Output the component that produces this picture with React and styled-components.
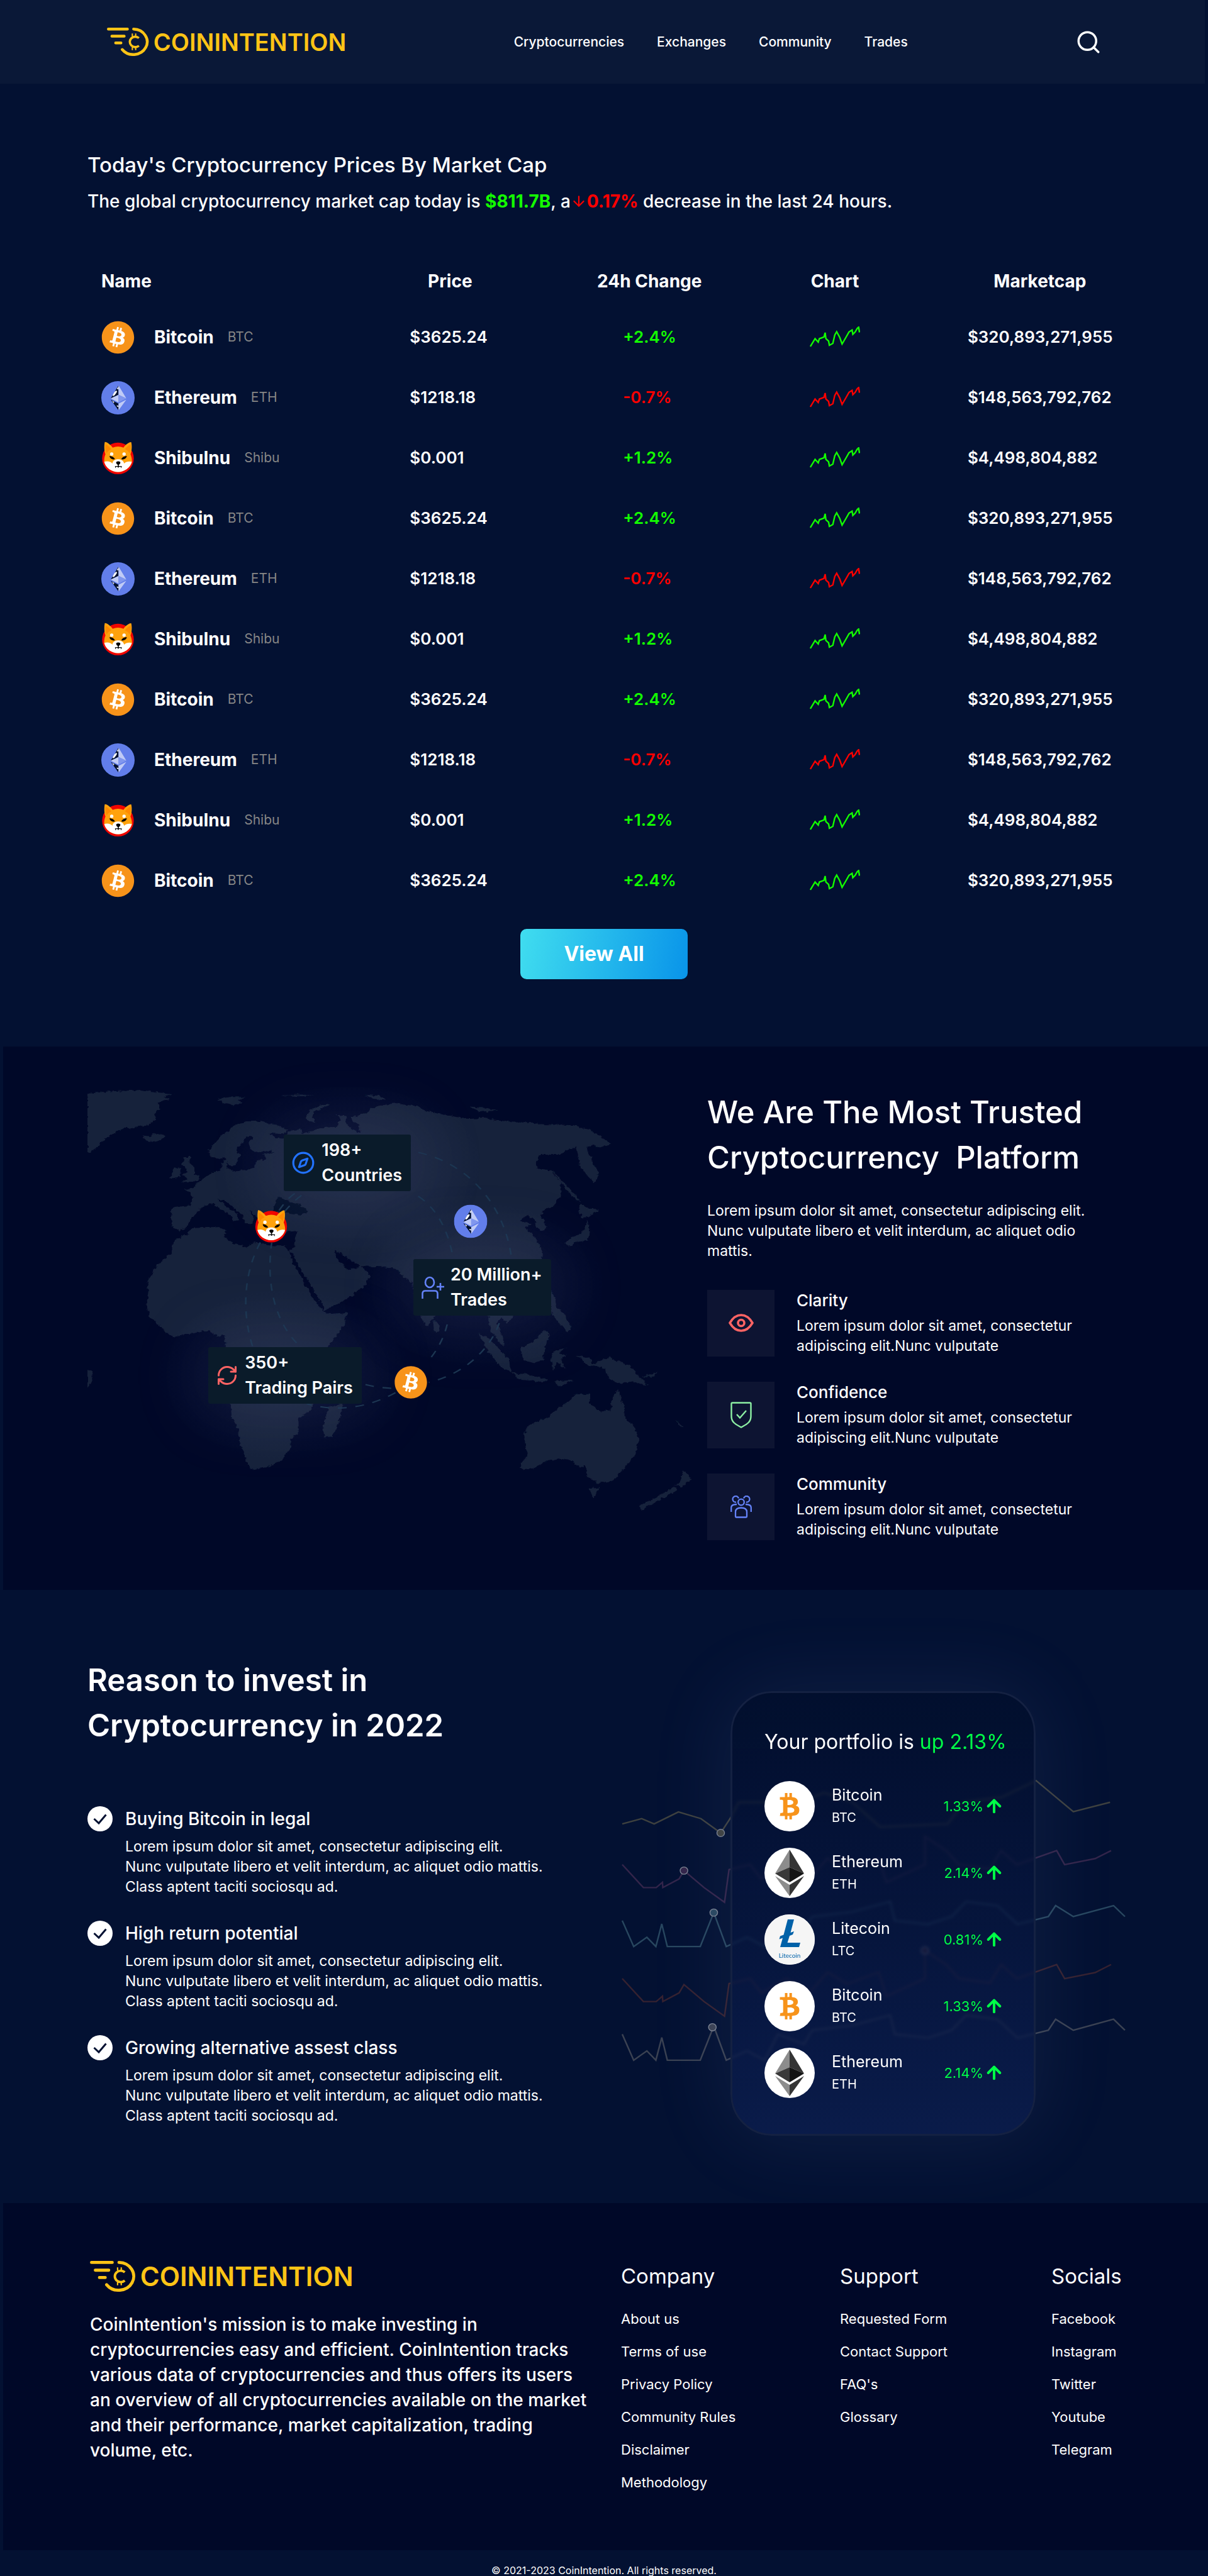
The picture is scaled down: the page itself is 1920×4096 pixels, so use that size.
import React from "react";
import styled, { createGlobalStyle } from "styled-components";
import { Search, ArrowDown, ArrowUp, Compass, RefreshCw } from "lucide-react";
import { FaBitcoin, FaBtc } from "react-icons/fa";

const color = {
  page: "#031132",
  deep: "#000828",
  nav: "#0a1837",
  gold: "#fec416",
  up: "#14ff00",
  down: "#ff0000",
  mint: "#00ff47",
  muted: "#868686",
};

const GlobalStyle = createGlobalStyle`
  *, *::before, *::after { box-sizing: border-box; }
  body {
    margin: 0;
    background: ${color.page};
    color: #fff;
    font-family: Inter, "Open Sans", "Liberation Sans", sans-serif;
    font-size: 23px;
    line-height: 32px;
  }
  h1, h2, h3, p, ul { margin: 0; padding: 0; font-weight: inherit; }
  ul { list-style: none; }
  a { color: inherit; text-decoration: none; }
  svg { display: block; flex: none; }
`;

/* ---------- Logo ---------- */

const LogoLink = styled.a`
  display: flex;
  width: fit-content;
  align-items: center;
  gap: 7px;
  color: ${color.gold};
  font-size: ${(p) => (p.$large ? 42 : 38)}px;
  line-height: 44px;
  font-weight: 600;

  svg {
    height: ${(p) => (p.$large ? 49 : 45)}px;
    width: auto;
  }
`;

function Logo({ large }) {
  return (
    <LogoLink href="#home" $large={large}>
      <svg viewBox="48 48 300 202" fill="none" stroke="currentColor" strokeLinecap="round" aria-hidden="true">
        <g strokeWidth="20">
          <path d="M58 58H194M83 109H171M110 157H148" />
          <path d="M238 58A99 91 0 1 1 157 204" />
        </g>
        <g strokeWidth="16" strokeLinecap="butt">
          <path d="M276 122A39 37 0 1 0 276 177" />
          <path strokeWidth="9" d="M229 90V112M253 90V112M229 186V208M253 186V208" />
        </g>
      </svg>
      COININTENTION
    </LogoLink>
  );
}

/* ---------- Coins ---------- */

const BtcDisc = styled.span`
  display: flex;
  width: 53px;
  height: 53px;
  border-radius: 50%;
  color: #f7931a;
  background: radial-gradient(circle, #fff 60%, transparent 61%);
`;

function ShibaCoin() {
  return (
    <svg width="53" height="53" viewBox="36 912 240 240" aria-hidden="true">
      <circle cx="156" cy="1034" r="114" fill="#f00500" />
      <path d="M61 916C76 914 104 938 118 956Q156 940 196 956C210 936 238 914 251 917C258 940 256 980 246 1004C256 1030 258 1050 256 1060C246 1100 200 1130 157 1132C110 1130 66 1100 57 1058C56 1040 58 1022 66 1004C56 976 56 940 61 916Z" fill="#ffa20d" />
      <path d="M68 932C84 940 98 954 108 968C92 974 80 986 74 998C66 976 64 950 68 932ZM246 932C230 940 214 954 206 968C222 974 234 986 240 998C247 976 249 950 246 932Z" fill="#ff8a00" />
      <path d="M57 1058C80 1050 104 1056 116 1070C120 1046 140 1040 158 1040C178 1040 196 1050 200 1070C214 1056 238 1052 256 1058C246 1100 200 1132 157 1132C110 1132 66 1100 57 1058Z" fill="#fff" />
      <circle cx="111" cy="1002" r="12" fill="#fff" />
      <circle cx="200" cy="1002" r="12" fill="#fff" />
      <path d="M95 1017C112 1016 130 1026 134 1040C118 1043 98 1036 95 1017ZM220 1017C202 1016 184 1026 180 1040C196 1043 216 1036 220 1017Z" fill="#000" />
      <path d="M143 1060Q158 1050 173 1060Q174 1074 162 1079V1089L184 1090L180 1104L176 1094H162V1100H155V1094H142L138 1104L134 1090L155 1089V1079Q142 1074 143 1060Z" fill="#000" />
    </svg>
  );
}

function EthCoin() {
  return (
    <svg width="53" height="53" viewBox="36 480 240 240" aria-hidden="true">
      <circle cx="156" cy="600" r="120" fill="#627eea" />
      <path d="M160 510L104 604L160 578ZM160 690L104 614L160 642Z" fill="#04122f" />
      <path d="M160 518V540L148 536ZM145 548C152 552 148 562 140 570C134 580 126 590 118 586C118 574 128 566 132 556ZM114 620L130 630L124 638ZM148 654L160 658V666L148 662Z" fill="#fff" />
      <path d="M160 510L216 604L160 578ZM160 642L216 614L160 690ZM104 604L160 578V634Z" fill="#c0cbf6" />
      <path d="M160 578L216 604L160 634Z" fill="#8197ee" />
    </svg>
  );
}

const coins = {
  btc: () => (
    <BtcDisc>
      <FaBitcoin size={53} />
    </BtcDisc>
  ),
  eth: EthCoin,
  shib: ShibaCoin,
};

/* ---------- Header ---------- */

const Header = styled.header`
  display: flex;
  align-items: center;
  justify-content: space-between;
  min-height: 133px;
  margin-right: 5px;
  padding: 0 164px 0 170px;
  background: ${color.nav};
`;

const NavList = styled.nav`
  display: flex;
  gap: 52px;
  font-size: 21px;
  font-weight: 500;
`;

const IconButton = styled.button`
  display: flex;
  padding: 0;
  border: 0;
  background: none;
  color: #fff;
  cursor: pointer;
`;

/* ---------- Market ---------- */

const Market = styled.section`
  display: flex;
  flex-direction: column;
  padding: 105px 139px 107px;
`;

const MarketTitle = styled.h1`
  font-size: 33px;
  line-height: 48px;
  font-weight: 500;
`;

const MarketSummary = styled.p`
  display: flex;
  align-items: center;
  margin-top: 14px;
  font-size: 28px;
  line-height: 40px;
  font-weight: 500;
  white-space: pre;
`;

const Trend = styled.strong`
  display: inline-flex;
  align-items: center;
  font-weight: 700;
  color: ${(p) => (p.$down ? color.down : color.up)};
`;

const PriceTable = styled.table`
  width: 100%;
  margin-top: 66px;
  border-collapse: collapse;
  table-layout: fixed;
  font-size: 26px;
  font-weight: 600;

  th {
    height: 82px;
    padding: 0;
    font-size: 28px;
    font-weight: 700;
  }
  td {
    height: 96px;
    padding: 0;
  }
  th:first-child,
  td:first-child {
    padding-left: 22px;
    text-align: left;
  }
`;

const Col = styled.col`
  width: ${(p) => p.$share}%;
`;

const CoinName = styled.div`
  display: flex;
  align-items: center;
  gap: 22px;
  font-size: 28px;
  font-weight: 700;

  > :first-child {
    margin-right: 9px;
  }
`;

const Ticker = styled.span`
  font-size: 21px;
  font-weight: 400;
  color: ${color.muted};
`;

const Value = styled.div`
  width: ${(p) => p.$width}px;
  margin: 0 auto;
  color: ${(p) => p.$color || "#fff"};
`;

function Sparkline() {
  return (
    <svg width="80" height="34" viewBox="0 0 80 34" fill="none" stroke="currentColor" strokeWidth="2.4" role="img" aria-label="Price trend">
      <path d="M1 32L8.5 19.5L13.5 25L15.3 19.5L22.6 16.8L24.5 10L25.7 19.5L30 23.3L31.2 30L36.7 27L39.8 13.7L42.8 8.4L47.7 17.5L51.4 28L57.5 17.5L62.4 8.8L67.3 5.7L68.5 12.6L72.2 8.8L75.3 3.4L77.7 1.1L79 9.5" />
    </svg>
  );
}

const ViewAll = styled.button`
  align-self: center;
  width: 266px;
  height: 80px;
  margin-top: 29px;
  border: 0;
  border-radius: 10px;
  background: linear-gradient(100deg, #40ddef, #0994e9);
  color: #fff;
  font: 700 32px/40px Inter, sans-serif;
  cursor: pointer;
`;

const market = {
  btc: { name: "Bitcoin", ticker: "BTC", price: "$3625.24", change: "+2.4%", cap: "$320,893,271,955" },
  eth: { name: "Ethereum", ticker: "ETH", price: "$1218.18", change: "-0.7%", cap: "$148,563,792,762" },
  shib: { name: "ShibuInu", ticker: "Shibu", price: "$0.001", change: "+1.2%", cap: "$4,498,804,882" },
};
const listing = ["btc", "eth", "shib", "btc", "eth", "shib", "btc", "eth", "shib", "btc"];

function MarketRow({ id }) {
  const coin = market[id];
  const Icon = coins[id];
  const tone = coin.change.startsWith("-") ? color.down : color.up;
  return (
    <tr>
      <td>
        <CoinName>
          <Icon />
          {coin.name}
          <Ticker>{coin.ticker}</Ticker>
        </CoinName>
      </td>
      <td><Value $width={128}>{coin.price}</Value></td>
      <td><Value $width={84} $color={tone}>{coin.change}</Value></td>
      <td><Value $width={80} $color={tone}><Sparkline /></Value></td>
      <td><Value $width={230}>{coin.cap}</Value></td>
    </tr>
  );
}

/* ---------- Platform ---------- */

const Platform = styled.section`
  display: grid;
  grid-template-columns: minmax(0, 1fr) 657px;
  gap: 24px;
  align-items: start;
  margin-left: 5px;
  padding: 64px 139px 79px 134px;
  background: ${color.deep};
`;

const MapFigure = styled.figure`
  position: relative;
  margin: 0;

  > svg {
    width: 100%;
    height: auto;
  }
`;

const Pin = styled.span`
  position: absolute;
  left: ${(p) => p.$x}%;
  top: ${(p) => p.$y}%;
  transform: translate(-50%, -50%);
`;

const Badge = styled.div`
  position: absolute;
  left: ${(p) => p.$x}%;
  top: ${(p) => p.$y}%;
  display: flex;
  align-items: center;
  gap: 10px;
  height: 90px;
  padding: 0 14px 0 12px;
  border-radius: 3px;
  background: #0a1b2a;
  box-shadow: 0 0 120px 30px rgba(150, 160, 220, 0.06);
  font-size: 27px;
  line-height: 40px;
  font-weight: 600;
  white-space: nowrap;

  > svg {
    color: ${(p) => p.$accent};
  }
`;

const land = [
  "M8 152L50 145L140 140L190 148L225 152L195 160L215 168L185 180L190 200L175 215L180 232L160 250L130 255L95 262L75 275L50 295L25 325L15 337L8 335Z",
  "M143 282L165 285L178 276L200 282L200 290L175 303L155 298Z",
  "M330 168L365 162L403 162L385 172L395 178L370 188L345 178Z",
  "M490 157L540 154L575 157L540 160ZM700 155L740 158L755 172L725 170ZM960 194L1000 196L1032 204L990 208Z",
  "M553 225L565 200L590 188L615 185L600 195L575 208L568 225L578 240L560 238Z",
  "M220 505L265 502L272 480L262 460L250 450L270 448L280 432L300 415L318 400L335 395L345 378L345 360L358 356L355 380L370 392L400 390L425 385L430 360L452 355L448 340L475 335L460 330L430 335L415 325L410 305L422 288L405 283L395 305L380 325L390 345L378 372L362 378L350 350L335 355L318 350L310 330L325 305L345 280L370 255L405 238L440 238L480 250L508 265L495 278L460 275L478 290L500 292L510 268L540 262L545 278L590 258L630 255L640 230L632 218L655 222L650 240L670 262L690 275L685 250L665 225L700 215L720 195L770 182L830 190L850 205L900 218L960 230L1000 228L1050 238L1100 240L1150 248L1220 250L1260 262L1295 290L1317 308L1285 318L1270 310L1255 322L1262 345L1285 400L1275 430L1255 405L1235 370L1232 340L1225 320L1200 330L1190 342L1135 342L1128 385L1165 390L1190 430L1190 470L1170 505L1150 510L1140 530L1155 565L1145 582L1130 570L1125 545L1105 530L1090 548L1115 560L1100 570L1120 590L1140 630L1145 660L1130 700L1090 720L1060 740L1050 760L1075 800L1070 850L1055 868L1040 850L1030 870L1045 910L1050 940L1035 930L1015 890L1008 850L990 800L965 770L940 775L900 800L880 840L855 878L840 850L825 800L820 740L800 725L780 700L740 692L690 690L665 675L640 650L622 640L625 655L640 680L655 700L680 698L690 685L714 722L700 750L660 790L610 822L600 828L590 800L565 750L540 700L520 650L512 645L525 630L528 600L530 580L500 585L460 580L440 560L435 545L425 530L410 515L425 540L415 560L400 555L395 530L375 510L350 485L335 482L355 505L380 525L385 545L375 550L365 530L340 510L322 495L300 500L285 515L265 545L255 570L238 578L222 570L215 540Z",
  "M265 572L340 568L355 580L350 600L375 620L405 632L425 615L460 625L500 628L512 645L520 680L545 730L565 780L590 820L605 840L658 835L650 870L610 940L570 990L555 1030L565 1080L575 1120L560 1145L535 1165L535 1210L515 1230L515 1260L490 1300L455 1318L418 1325L405 1300L388 1240L385 1200L368 1160L365 1110L372 1060L350 1000L355 940L350 905L330 910L315 892L270 900L222 912L190 880L162 845L155 810L160 770L158 740L180 690L215 650L225 610L262 585Z",
  "M608 1130L645 1120L640 1160L620 1222L600 1225L595 1195L605 1160Z",
  "M250 350L265 350L260 365L275 380L275 400L292 415L280 425L242 428L258 415L245 405L260 395L245 375ZM222 385L240 382L240 410L215 418Z",
  "M872 860L885 870L885 892L875 895Z",
  "M1240 495L1258 510L1285 512L1270 530L1245 540L1235 520ZM1255 545L1262 575L1258 610L1225 615L1212 630L1200 618L1215 600L1240 590L1250 570ZM1168 392L1200 430L1240 490L1225 480L1190 430Z",
  "M1165 765L1175 790L1180 820L1200 840L1215 880L1210 898L1195 880L1180 860L1165 835Z",
  "M985 900L1010 915L1060 980L1065 1020L1040 1005L1010 960ZM1065 1022L1110 1030L1160 1045L1150 1052L1090 1045ZM1170 1050L1220 1046L1190 1066Z",
  "M1090 945L1120 925L1150 890L1163 905L1150 940L1145 985L1115 993L1095 980ZM1170 955L1205 945L1185 960L1205 970L1190 980L1200 1010L1180 990L1172 1015L1165 985Z",
  "M1230 970L1260 975L1270 995L1310 975L1360 1000L1385 1035L1408 1065L1370 1050L1340 1058L1310 1040L1300 1010L1260 1000ZM1395 1035L1430 1020L1425 1035ZM1478 1172L1495 1190L1488 1192Z",
  "M1332 1075L1345 1120L1350 1165L1375 1195L1385 1235L1375 1280L1345 1325L1320 1360L1280 1368L1255 1345L1250 1310L1235 1318L1220 1298L1190 1290L1150 1300L1125 1320L1095 1328L1088 1318L1105 1280L1098 1220L1105 1190L1160 1160L1185 1130L1215 1110L1225 1090L1260 1090L1260 1120L1290 1145L1315 1140L1318 1105Z",
  "M1262 1385L1288 1382L1270 1415ZM1495 1325L1515 1355L1490 1380L1475 1375L1490 1360ZM1475 1378L1480 1390L1430 1425L1390 1452L1385 1440L1430 1410Z",
  "M8 1013L20 1018L20 1050L8 1070Z",
];

const routes =
  "M834 335C960 370 1050 500 1067 668M1036 868C1010 960 940 1030 860 1053M834 472C880 510 910 580 921 668M906 872C895 930 870 970 855 992M702 1060Q730 1070 777 1072M777 1085C720 1125 640 1150 555 1120M420 940C395 840 395 720 440 615C470 545 500 480 530 460M530 930C470 850 455 730 468 617M500 520Q530 475 560 455";

function WorldMap() {
  return (
    <svg viewBox="0 0 960 677" aria-hidden="true">
      <defs>
        <filter id="coast" x="0" y="0" width="100%" height="100%">
          <feTurbulence type="fractalNoise" baseFrequency="0.09" numOctaves="3" seed="4" result="noise" />
          <feDisplacementMap in="SourceGraphic" in2="noise" scale="12" xChannelSelector="R" yChannelSelector="G" />
        </filter>
        <radialGradient id="haze">
          <stop offset="0" stopColor="#8b93c8" stopOpacity="0.1" />
          <stop offset="1" stopColor="#8b93c8" stopOpacity="0" />
        </radialGradient>
      </defs>
      <g transform="scale(0.636 0.5087) translate(-8 -130)">
        <g fill="#15203a" filter="url(#coast)">
          {land.map((d) => (
            <path key={d} d={d} />
          ))}
          <path fill={color.deep} d="M485 470L475 500L470 520L500 522L540 530L562 520L540 500L515 490L500 485Z" />
        </g>
        <ellipse cx="667" cy="380" rx="330" ry="270" fill="url(#haze)" />
        <ellipse cx="990" cy="750" rx="310" ry="260" fill="url(#haze)" />
        <ellipse cx="500" cy="1030" rx="320" ry="270" fill="url(#haze)" />
        <path d={routes} fill="none" stroke="#1b3550" strokeWidth="4" strokeDasharray="22 22" />
      </g>
    </svg>
  );
}

function UserPlusIcon() {
  return (
    <svg width="37" height="37" viewBox="0 0 37 37" fill="none" stroke="currentColor" strokeWidth="2.6" aria-hidden="true">
      <ellipse cx="14" cy="10" rx="7" ry="8" />
      <path d="M2.500 36V28Q2.500 23.500 7 23.500H22Q26.500 23.500 26.500 28V36M31 11V23M25 17H37" />
    </svg>
  );
}

const Pitch = styled.div`
  padding-top: 5px;
`;

const BigTitle = styled.h2`
  font-size: 49px;
  line-height: 72px;
  font-weight: ${(p) => p.$weight || 500};
  white-space: pre-wrap;
`;

const Copy = styled.p`
  white-space: pre-line;
`;

const Lead = styled(Copy)`
  margin-top: 32px;
`;

const FeatureList = styled.ul`
  display: grid;
  gap: 40px;
  margin-top: 46px;
`;

const Feature = styled.li`
  display: flex;
  align-items: center;
  gap: 35px;
`;

const FeatureIcon = styled.div`
  display: grid;
  place-items: center;
  width: 107px;
  height: 106px;
  background: #0d1432;
`;

const ItemTitle = styled.h3`
  margin-bottom: 8px;
  font-size: ${(p) => p.$size || 26}px;
  font-weight: 500;
`;

const features = [
  {
    title: "Clarity",
    icon: (
      <svg width="40" height="30" viewBox="0 0 40 30" fill="none" stroke="#ff6464" strokeWidth="3.6" aria-hidden="true">
        <path d="M2 14.500C7 6 13 2 20 2S33 6 38 14.500C33 23 27 27 20 27S7 23 2 14.500Z" strokeLinejoin="round" />
        <circle cx="20" cy="14.500" r="5" />
      </svg>
    ),
  },
  {
    title: "Confidence",
    icon: (
      <svg width="34" height="42" viewBox="0 0 34 42" fill="none" stroke="#8df0a4" strokeWidth="2.4" aria-hidden="true">
        <path d="M1.500 3Q1.500 1.500 3 1.500H31Q32.500 1.500 32.500 3V23C32.500 33 25 36 17 40.500C9 36 1.500 33 1.500 23Z" />
        <path d="M10 20L15 25.500L25 14" />
      </svg>
    ),
  },
  {
    title: "Community",
    icon: (
      <svg width="34" height="36" viewBox="0 0 34 36" fill="none" stroke="#6483f8" strokeWidth="2.300" aria-hidden="true">
        <circle cx="17" cy="10.500" r="4.800" />
        <path d="M9 34.500Q8 34.500 8 33V26Q8 19.500 17 19.500T26 26V33Q26 34.500 25 34.500ZM13 4.500A4.800 4.800 0 1 0 9 10.500M21 4.500A4.800 4.800 0 1 1 25 10.500M1.200 26V19Q1.200 14 10 14M32.800 26V19Q32.800 14 24 14" />
      </svg>
    ),
  },
];

/* ---------- Reasons ---------- */

const Reasons = styled.section`
  display: grid;
  grid-template-columns: minmax(0, 1fr) 799px;
  align-items: start;
  padding: 108px 132px 107px 139px;
`;

const ReasonList = styled.ul`
  display: grid;
  gap: 38px;
  margin-top: 92px;
`;

const Reason = styled.li`
  display: grid;
  grid-template-columns: 40px 1fr;
  column-gap: 20px;

  ${ItemTitle} {
    line-height: 40px;
  }
`;

const Tick = styled.svg`
  width: 40px;
  height: 40px;
  border-radius: 50%;
  background: #fff;
`;

const Stage = styled.div`
  display: grid;
  margin-top: 53px;

  > * {
    grid-area: 1 / 1;
  }
`;

const Trails = styled.svg`
  width: 799px;
  height: 461px;
  margin-top: 137px;
  overflow: visible;
`;

const Card = styled.div`
  width: 485px;
  margin-left: 172px;
  padding: 54px 52px 57px 51px;
  border: 3px solid #142142;
  border-radius: 66px;
  background: linear-gradient(rgba(2, 14, 44, 0.7), rgba(13, 31, 82, 0.75));
  backdrop-filter: blur(2px);
  box-shadow: 0 0 130px 10px rgba(140, 170, 240, 0.09);
`;

const CardTitle = styled.h3`
  font-size: 32px;
  line-height: 48px;
  white-space: nowrap;

  span {
    color: ${color.mint};
  }
`;

const Holdings = styled.ul`
  display: grid;
  gap: 26px;
  margin-top: 38px;
`;

const Holding = styled.li`
  display: grid;
  grid-template-columns: 80px 1fr auto;
  align-items: center;
  gap: 27px;
  line-height: 36px;
`;

const Disc = styled.div`
  display: grid;
  place-items: center;
  width: 80px;
  height: 80px;
  border-radius: 50%;
  background: #fff;
  color: #f7931a;
`;

const HoldingName = styled.p`
  font-size: 25px;
`;

const HoldingTicker = styled.p`
  font-size: 20px;
`;

const Gain = styled.div`
  display: flex;
  align-items: center;
  gap: 1px;
  margin-right: -5px;
  font-size: 22px;
  color: ${color.mint};
`;

const discs = {
  BTC: <FaBtc size={42} />,
  ETH: (
    <svg width="46" height="74" viewBox="0 0 46 74" aria-hidden="true">
      <path fill="#8c8c8c" d="M23 0L0 38L23 28ZM0 42L23 74V56Z" />
      <path fill="#343434" d="M23 0L46 38L23 28ZM46 42L23 74V56Z" />
      <path fill="#393939" d="M23 28L0 38L23 52Z" />
      <path fill="#141414" d="M23 28L46 38L23 52Z" />
    </svg>
  ),
  LTC: (
    <svg width="80" height="80" viewBox="0 0 80 80" aria-hidden="true">
      <circle cx="40" cy="40" r="40" fill="#f5f5f5" />
      <path fill="#0061a8" d="M37 8H47L41.500 29L47 27L45 32L40 34L36.500 45H57L55 52H25L29 37.500L23.500 39.500L25 34.500L30.500 32.500Z" />
      <text x="40" y="69" textAnchor="middle" fontSize="10" fontFamily="Lato" fill="#0061a8">Litecoin</text>
    </svg>
  ),
};

const holdings = [
  ["Bitcoin", "BTC", "1.33%"],
  ["Ethereum", "ETH", "2.14%"],
  ["Litecoin", "LTC", "0.81%"],
  ["Bitcoin", "BTC", "1.33%"],
  ["Ethereum", "ETH", "2.14%"],
];

const amber = "46,480 102,464 138,480 208,444 273,464 330,507 357,464 382,415 560,415 628,386 710,415 790,489 985,480 1030,415 1140,400 1240,350 1347,443 1453,415";
const jagged = "46,602 107,671 144,671 162,655 163,671 210,645 224,620 282,671 341,715 354,617 415,602 447,645 520,602 590,640 638,583 695,618 786,583 808,655 919,602 919,518 980,560 1017,602 1107,615 1139,560 1184,602 1299,560 1322,602 1410,584 1456,560";
const spiky = "46,770 79,848 117,820 143,848 160,780 176,848 271,848 310,746 346,848 406,820 457,848 495,770 570,800 594,758 708,744 819,713 832,770 928,781 996,758 1038,713 1128,725 1186,781 1275,758 1296,725 1347,758 1463,725 1496,758";

const trails = [
  { points: amber, tone: "#3e413f", shift: 0, dot: [330, 507] },
  { points: jagged, tone: "#33254a", shift: 0, dot: [224, 620] },
  { points: spiky, tone: "#28475f", shift: 0, dot: [310, 746] },
  { points: jagged, tone: "#362230", shift: 342, dot: [919, 518] },
  { points: spiky, tone: "#3b4252", shift: 341, dot: [306, 749] },
];

function TrailChart() {
  return (
    <Trails viewBox="46 340 1450 870" preserveAspectRatio="none" fill="none" aria-hidden="true">
      {trails.map((t, i) => (
        <g key={i} transform={`translate(0 ${t.shift})`} stroke={t.tone} strokeWidth="4.5">
          <polyline points={t.points} />
          <circle cx={t.dot[0]} cy={t.dot[1]} r="11" fill={t.tone} stroke="#7d8492" strokeWidth="2.5" />
        </g>
      ))}
    </Trails>
  );
}

/* ---------- Footer ---------- */

const Footer = styled.footer`
  display: grid;
  grid-template-columns: minmax(0, 844fr) minmax(0, 348fr) minmax(0, 336fr) minmax(0, 113fr);
  margin-left: 5px;
  padding: 92px 136px 82px 138px;
  background: ${color.deep};
`;

const Mission = styled.p`
  margin-top: 32px;
  font-size: 28px;
  line-height: 40px;
  font-weight: 500;
  white-space: pre-line;
`;

const LinkTitle = styled.h3`
  margin-bottom: 18px;
  font-size: 33px;
  line-height: 48px;
`;

const LinkList = styled.ul`
  font-size: 22px;
  line-height: 52px;
  white-space: nowrap;
`;

const Legal = styled.p`
  padding: 22px 0 1px;
  font-size: 16px;
  line-height: 20px;
  text-align: center;
`;

const linkGroups = [
  ["Company", ["About us", "Terms of use", "Privacy Policy", "Community Rules", "Disclaimer", "Methodology"]],
  ["Support", ["Requested Form", "Contact Support", "FAQ's", "Glossary"]],
  ["Socials", ["Facebook", "Instagram", "Twitter", "Youtube", "Telegram"]],
];

const lorem = `Lorem ipsum dolor sit amet, consectetur adipiscing elit.
Nunc vulputate libero et velit interdum, ac aliquet odio mattis.
Class aptent taciti sociosqu ad.`;

export default function App() {
  return (
    <>
      <GlobalStyle />
      <Header>
        <Logo />
        <NavList>
          {["Cryptocurrencies", "Exchanges", "Community", "Trades"].map((label) => (
            <a key={label} href={`#${label.toLowerCase()}`}>{label}</a>
          ))}
        </NavList>
        <IconButton aria-label="Search">
          <Search size={42} />
        </IconButton>
      </Header>

      <main>
        <Market>
          <MarketTitle>Today's Cryptocurrency Prices By Market Cap</MarketTitle>
          <MarketSummary>
            {"The global cryptocurrency market cap today is "}
            <Trend>$811.7B</Trend>
            {", a"}
            <Trend $down><ArrowDown size={26} />0.17%</Trend>
            {" decrease in the last 24 hours."}
          </MarketSummary>
          <PriceTable>
            <colgroup>
              <Col $share={21.7} />
              <Col $share={26.8} />
              <Col $share={11.8} />
              <Col $share={24.1} />
              <Col $share={15.6} />
            </colgroup>
            <thead>
              <tr>
                {["Name", "Price", "24h Change", "Chart", "Marketcap"].map((h) => (
                  <th key={h} scope="col">{h}</th>
                ))}
              </tr>
            </thead>
            <tbody>
              {listing.map((id, i) => (
                <MarketRow key={i} id={id} />
              ))}
            </tbody>
          </PriceTable>
          <ViewAll>View All</ViewAll>
        </Market>

        <Platform>
          <MapFigure>
            <WorldMap />
            <Badge $x={32.5} $y={11.2} $accent="#2272ff">
              <Compass size={38} />
              <div>198+<br />Countries</div>
            </Badge>
            <Badge $x={53.9} $y={40.5} $accent="#6483f8">
              <UserPlusIcon />
              <div>20 Million+<br />Trades</div>
            </Badge>
            <Badge $x={20} $y={61.1} $accent="#ff6464">
              <RefreshCw size={36} />
              <div>350+<br />Trading Pairs</div>
            </Badge>
            <Pin $x={30.4} $y={32.8}><ShibaCoin /></Pin>
            <Pin $x={63.4} $y={31.6}><EthCoin /></Pin>
            <Pin $x={53.5} $y={69.3}>{coins.btc()}</Pin>
          </MapFigure>
          <Pitch>
            <BigTitle>{"We Are The Most Trusted\nCryptocurrency  Platform"}</BigTitle>
            <Lead>
              {"Lorem ipsum dolor sit amet, consectetur adipiscing elit.\nNunc vulputate libero et velit interdum, ac aliquet odio\nmattis."}
            </Lead>
            <FeatureList>
              {features.map((f) => (
                <Feature key={f.title}>
                  <FeatureIcon>{f.icon}</FeatureIcon>
                  <div>
                    <ItemTitle>{f.title}</ItemTitle>
                    <Copy>{"Lorem ipsum dolor sit amet, consectetur\nadipiscing elit.Nunc vulputate"}</Copy>
                  </div>
                </Feature>
              ))}
            </FeatureList>
          </Pitch>
        </Platform>

        <Reasons>
          <div>
            <BigTitle $weight={600}>{"Reason to invest in\nCryptocurrency in 2022"}</BigTitle>
            <ReasonList>
              {["Buying Bitcoin in legal", "High return potential", "Growing alternative assest class"].map((title) => (
                <Reason key={title}>
                  <Tick viewBox="0 0 40 40" fill="none" stroke={color.page} strokeWidth="3" aria-hidden="true">
                    <path d="M10.500 20L18 27L29.500 13.500" />
                  </Tick>
                  <div>
                    <ItemTitle $size={28}>{title}</ItemTitle>
                    <Copy>{lorem}</Copy>
                  </div>
                </Reason>
              ))}
            </ReasonList>
          </div>
          <Stage>
            <TrailChart />
            <Card>
              <CardTitle>Your portfolio is <span>up 2.13%</span></CardTitle>
              <Holdings>
                {holdings.map(([name, ticker, gain], i) => (
                  <Holding key={i}>
                    <Disc>{discs[ticker]}</Disc>
                    <div>
                      <HoldingName>{name}</HoldingName>
                      <HoldingTicker>{ticker}</HoldingTicker>
                    </div>
                    <Gain>{gain}<ArrowUp size={32} strokeWidth={3} /></Gain>
                  </Holding>
                ))}
              </Holdings>
            </Card>
          </Stage>
        </Reasons>
      </main>

      <Footer>
        <div>
          <Logo large />
          <Mission>
            {"CoinIntention's mission is to make investing in\ncryptocurrencies easy and efficient. CoinIntention tracks\nvarious data of cryptocurrencies and thus offers its users\nan overview of all cryptocurrencies available on the market\nand their performance, market capitalization, trading\nvolume, etc."}
          </Mission>
        </div>
        {linkGroups.map(([title, links]) => (
          <nav key={title} aria-label={title}>
            <LinkTitle>{title}</LinkTitle>
            <LinkList>
              {links.map((label) => (
                <li key={label}><a href="#top">{label}</a></li>
              ))}
            </LinkList>
          </nav>
        ))}
      </Footer>
      <Legal>© 2021-2023 CoinIntention. All rights reserved.</Legal>
    </>
  );
}
